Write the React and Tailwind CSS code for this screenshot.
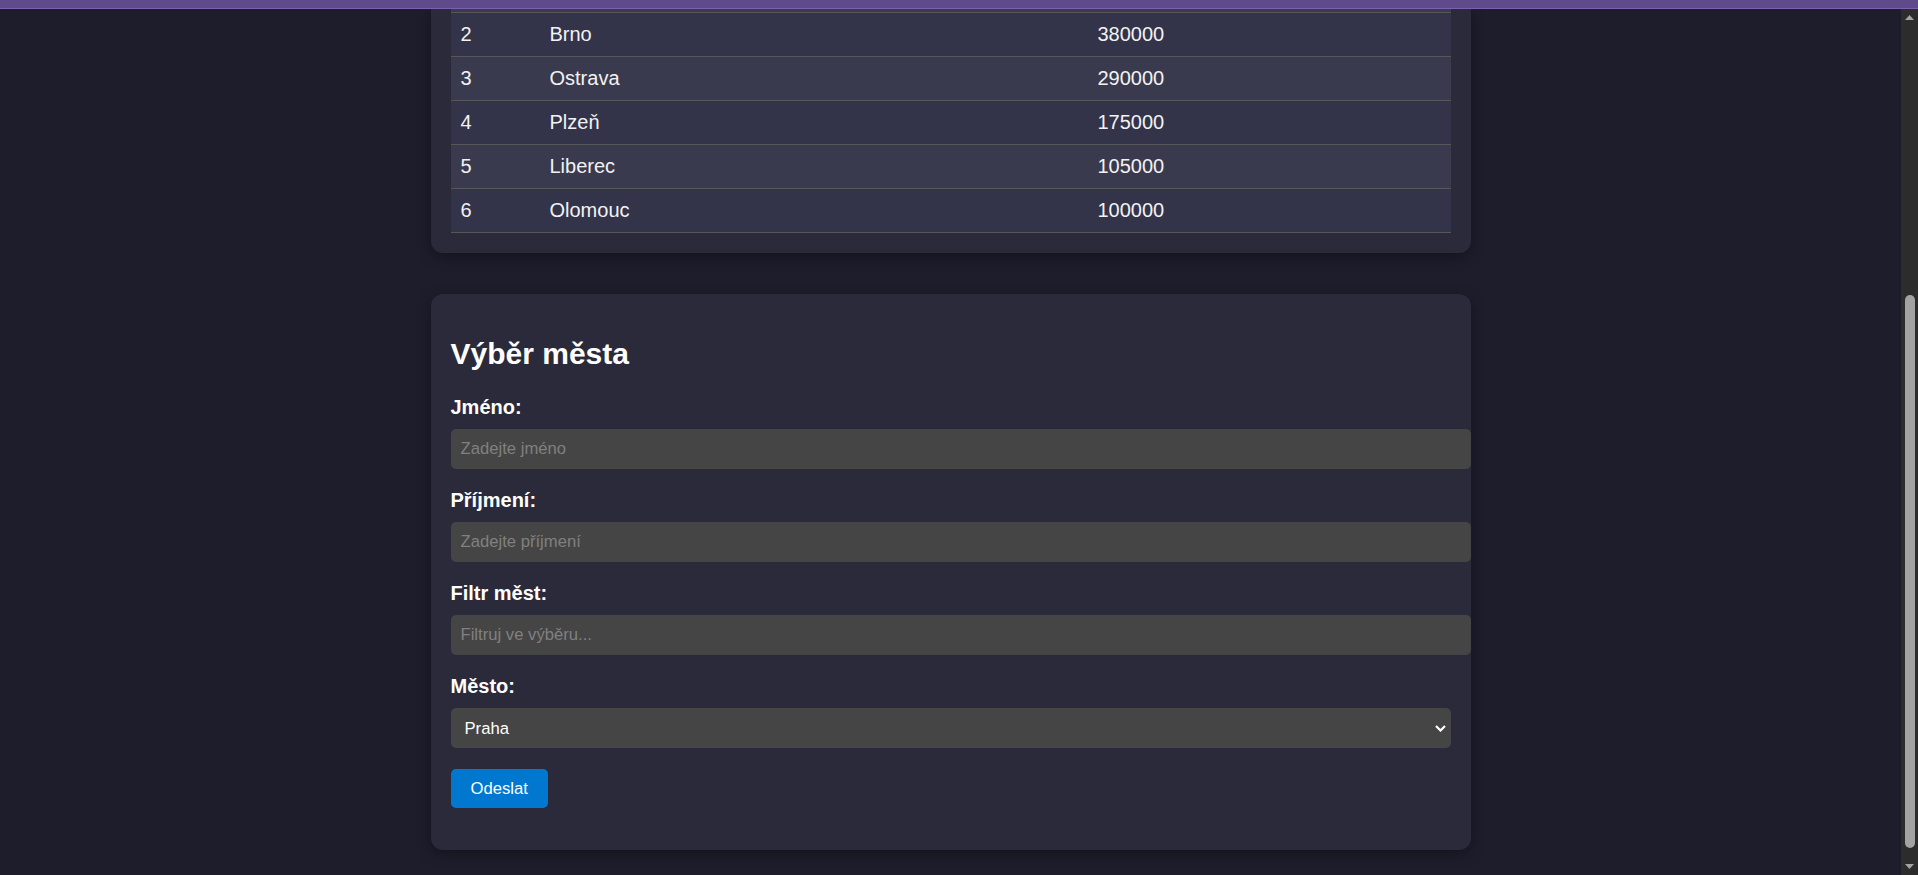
import React from 'react';

// Data tabulky měst (řádek Praha je odscrollovaný nad okrajem okna)
const cities = [
  { id: 2, name: 'Brno', pop: 380000 },
  { id: 3, name: 'Ostrava', pop: 290000 },
  { id: 4, name: 'Plzeň', pop: 175000 },
  { id: 5, name: 'Liberec', pop: 105000 },
  { id: 6, name: 'Olomouc', pop: 100000 },
];

const options = ['Praha', 'Brno', 'Ostrava', 'Plzeň', 'Liberec', 'Olomouc'];

const Field = ({ label, placeholder }) => (
  <div className="mb-[20px]">
    <label className="block mb-[10px] text-[20px] leading-[23px] font-bold text-white">{label}</label>
    <input
      type="text"
      placeholder={placeholder}
      className="block w-[1020px] h-[40px] px-[10px] rounded-[5px] bg-[#454545] text-white text-[16.67px] outline-none placeholder:text-[#808080]"
    />
  </div>
);

const Scrollbar = () => (
  <div className="w-[17px] shrink-0 flex flex-col bg-[#2c2c2c]">
    <div className="h-[17px] flex items-center justify-center">
      <svg width="9" height="5" viewBox="0 0 9 5"><polygon points="4.5,0 9,5 0,5" fill="#a3a3a3" /></svg>
    </div>
    <div className="flex-1 pt-[269px] pl-[4px]">
      <div className="w-[10px] h-[553px] rounded-full bg-[#a3a3a3]" />
    </div>
    <div className="h-[17px] flex items-center justify-center">
      <svg width="9" height="5" viewBox="0 0 9 5"><polygon points="0,0 9,0 4.5,5" fill="#a3a3a3" /></svg>
    </div>
  </div>
);

export default function App() {
  return (
    <div className="h-[875px] w-full overflow-hidden flex flex-col bg-[#1e1d2c] font-['Liberation_Sans',Arial,sans-serif]">
      {/* horní lišta */}
      <div className="h-[9px] shrink-0 bg-[#5f4a8b] border-b border-[#7b61ae]" />

      <div className="flex flex-1 min-h-0">
        <main className="flex-1 overflow-hidden">
          <div className="flex flex-col items-center gap-[41px]">
            {/* Tabulka měst - horní část je mimo okno */}
            <section className="w-[1040px] px-[20px] pb-[20px] rounded-b-[12px] bg-[#2b2a3a] shadow-[0_4px_14px_rgba(0,0,0,0.35)]">
              <div className="h-[4px] bg-[#3a3a4e] border-b border-[#57575a]" />
              <table className="w-[1000px] border-collapse text-[20px] leading-[23px] text-[#f2f2f2]">
                <tbody>
                  {cities.map((c, i) => (
                    <tr key={c.id} className={`border-b border-[#57575a] ${i % 2 === 1 ? 'bg-[#3a3a4e]' : 'bg-[#33334a]'}`}>
                      <td className="w-[89px] p-[10px] text-left">{c.id}</td>
                      <td className="w-[548px] p-[10px] text-left">{c.name}</td>
                      <td className="p-[10px] text-left">{c.pop}</td>
                    </tr>
                  ))}
                </tbody>
              </table>
            </section>

            {/* Formulář */}
            <section className="w-[1040px] px-[20px] pt-[20px] pb-[42px] rounded-[12px] bg-[#2b2a3a] shadow-[0_4px_14px_rgba(0,0,0,0.35)]">
              <h2 className="mt-[23px] mb-[25px] text-[30px] leading-[34px] font-bold text-white">Výběr města</h2>
              <form onSubmit={(e) => e.preventDefault()}>
                <Field label="Jméno:" placeholder="Zadejte jméno" />
                <Field label="Příjmení:" placeholder="Zadejte příjmení" />
                <Field label="Filtr měst:" placeholder="Filtruj ve výběru..." />

                <div className="mb-[21px]">
                  <label className="block mb-[10px] text-[20px] leading-[23px] font-bold text-white">Město:</label>
                  <div className="relative w-[1000px]">
                    <select className="block w-full h-[40px] pl-[14px] pr-[30px] rounded-[5px] bg-[#454545] text-white text-[16.67px] appearance-none outline-none">
                      {options.map((o) => (
                        <option key={o}>{o}</option>
                      ))}
                    </select>
                    <svg className="absolute right-[5px] top-[17px] pointer-events-none" width="11" height="7" viewBox="0 0 11 7">
                      <polyline points="1,1 5.5,5.5 10,1" fill="none" stroke="#ffffff" strokeWidth="2.2" />
                    </svg>
                  </div>
                </div>

                <button type="submit" className="h-[39px] px-[20px] rounded-[5px] bg-[#0078d0] text-white text-[16.67px]">
                  Odeslat
                </button>
              </form>
            </section>
          </div>
        </main>
        <Scrollbar />
      </div>
    </div>
  );
}
